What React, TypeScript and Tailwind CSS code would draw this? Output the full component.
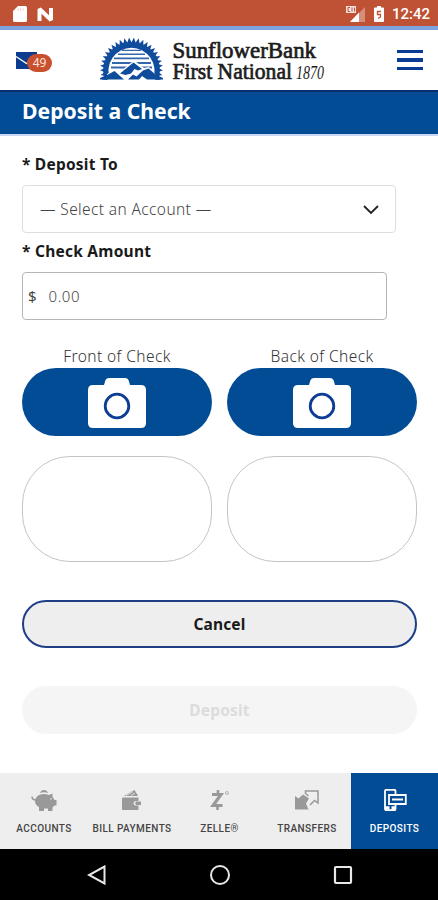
import { useState, type ReactNode } from 'react';

const teeth = Array.from({ length: 26 }, (_, i) => 160 + (i * 220) / 25);

function SdCard() {
  return (
    <svg width="14" height="16" viewBox="0 0 14 16" fill="#fff">
      <path d="M5 0h7.5A1.5 1.5 0 0 1 14 1.5v13a1.5 1.5 0 0 1-1.5 1.5h-11A1.5 1.5 0 0 1 0 14.5V5z" />
      <path d="M5 2.5v2M7.5 2.5v2M10 2.5v2" stroke="#bf5234" strokeWidth="0.8" opacity="0.4" />
    </svg>
  );
}

function NougatIcon() {
  return (
    <svg width="17" height="15" viewBox="0 0 17 15">
      <path d="M2.5 14V2l11.5 11V1" fill="none" stroke="#fff" strokeWidth="4" strokeLinejoin="bevel" />
    </svg>
  );
}

function SignalIcon() {
  return (
    <svg width="20" height="17" viewBox="0 0 20 17">
      <path d="M19 1v15H4z" fill="#fff" opacity="0.35" />
      <path d="M13 6.5V16H4z" fill="#fff" />
      <rect x="0" y="0" width="10" height="7" fill="#f4dfd9" />
      <path d="M4 1.5H2v4h2M6 1.5v4M8.5 1.5v4" fill="none" stroke="#b5443a" strokeWidth="0.9" />
    </svg>
  );
}

function BatteryIcon() {
  return (
    <svg width="10" height="16" viewBox="0 0 10 16">
      <path d="M3 0h4v1.6h2a1 1 0 0 1 1 1V15a1 1 0 0 1-1 1H1a1 1 0 0 1-1-1V2.6a1 1 0 0 1 1-1h2z" fill="#fff" />
      <path d="M7 5.5H3.5v3h3V11L4 12.5" fill="none" stroke="#bf5234" strokeWidth="1.3" />
    </svg>
  );
}

function BankLogo() {
  return (
    <svg width="232" height="48" viewBox="0 0 232 48" className="shrink-0">
      <g fill="#104c9c">
        {teeth.map((deg) => (
          <path key={deg} d="M58.500 30.700 64 33l-5.500 2.300z" transform={`rotate(${deg} 32.500 33)`} />
        ))}
        <path d="M5.600 43a28.300 28.300 0 1 1 53.800 0H54a23 23 0 1 0-43 0z" />
        <path d="M23 13.800h19V15H23zM19 17.500h27v1.400H19zM15 21.500h35v1.700H15zM13 26h39v1.900H13zM12 30.500h41v2H12z" opacity="0.85" />
      </g>
      <path d="M8 43V38l9-5 5 2 11-9 3-1 9 7 5-1 10 12z" fill="#fff" />
      <path
        d="M1 43.500v-1.500l8-3.500 6.500-3.500 5 4.500 4.500 4zM21 37.500l13.500-11L43 33l-4 1.500-3.500-1.500-3.500 4.500-5.500 1.500zM29 43.500l5-5 3.500 2 6.500-6 5.500-2 7 6 7.500 3.500v1.500H48l-5-3.500-3 3.500z"
        fill="#104c9c"
      />
      <g fill="#1c1c1c" stroke="#1c1c1c" strokeWidth="0.7" className="font-['Liberation_Serif',serif]">
        <text x="73.500" y="21.500" fontSize="22.500" textLength="143.500" lengthAdjust="spacingAndGlyphs">SunflowerBank</text>
        <text x="73.500" y="42.500" fontSize="22.500" textLength="119.500" lengthAdjust="spacingAndGlyphs">First National</text>
        <text x="197" y="43" fontSize="18" stroke="none" fontStyle="italic" textLength="28" lengthAdjust="spacingAndGlyphs">1870</text>
      </g>
    </svg>
  );
}

function CameraIcon() {
  return (
    <svg width="58" height="52" viewBox="0 0 58 52">
      <path
        d="M5 8h11l1.500-5Q18.500 1 21 1h16q2.500 0 3.500 2L42 8h11q5 0 5 5v33q0 5-5 5H5q-5 0-5-5V13q0-5 5-5z"
        fill="#fff"
      />
      <circle cx="29" cy="29" r="11.8" fill="none" stroke="#0c3c94" strokeWidth="2.8" />
    </svg>
  );
}

function PiggyIcon() {
  return (
    <svg width="26" height="24" viewBox="0 0 26 24" fill="#999">
      <path d="M9 5a4.200 4.200 0 0 1 8 0q-4-1.500-8 0z" />
      <path d="M1 8.500q0 3.500 4 3.500" fill="none" stroke="#999" strokeWidth="1.5" />
      <path d="M4 13q1-7 9-7 3 0 5 1l3.500-1.500V9q1.500 1.500 2 3H25.500v5.500H23.500l-2 2v3.500h-4.500V20.500h-4v2.500H8v-4q-4-2-4-6z" />
      <path d="M20 10v1.500" stroke="#eee" strokeWidth="1.2" />
    </svg>
  );
}

function WalletIcon() {
  return (
    <svg width="20" height="20" viewBox="0 0 20 20" fill="#999">
      <path d="M2 6 12.500 0 15 4 16 6z" />
      <path d="M4 5.500l6.500-3.500M9 5.500l4-2.500" stroke="#eee" strokeWidth="0.8" />
      <path d="M1 7.500h15.500V11H14q-2.500 0-2.500 2.300t2.500 2.200h2.500V20H1q-1 0-1-1V8.500q0-1 1-1z" />
      <path d="M14 11.500h5v3.500h-5q-1.800-1.700 0-3.500z" />
    </svg>
  );
}

function ZelleIcon() {
  return (
    <svg width="20" height="22" viewBox="0 0 20 22" fill="none" stroke="#999">
      <path d="M2 5.500h9L3 16.500h9.500" strokeWidth="3.2" />
      <path d="M8 1v4M7.500 17v4" strokeWidth="2.6" />
      <circle cx="17" cy="4" r="1.5" strokeWidth="0.7" />
    </svg>
  );
}

function TransferIcon() {
  return (
    <svg width="24" height="20" viewBox="0 0 24 20">
      <path d="M13.500 6 10.500 3.500V1H23v12l-3.500-2.500L15 15" fill="none" stroke="#999" strokeWidth="1.5" />
      <path d="M0 6l3.500 2.500L8 4.500l6 4-3 5 2.500 6H0z" fill="#999" />
    </svg>
  );
}

function DepositIcon() {
  return (
    <svg width="24" height="22" viewBox="0 0 24 22" fill="none" stroke="#fff">
      <path d="M12.500 5V2q0-1.200-1.200-1.200h-8Q2 .8 2 2v18q0 1.200 1.300 1.200h8q1.200 0 1.200-1.200v-4" strokeWidth="1.8" />
      <path d="M2 19h4.500M8.500 19h4" strokeWidth="3.5" />
      <path d="M6 6h16.800v9H6z" strokeWidth="1.8" />
      <path d="M9 10.500h11" strokeWidth="2" />
    </svg>
  );
}

const tabs: { label: string; icon: ReactNode }[] = [
  { label: 'ACCOUNTS', icon: <PiggyIcon /> },
  { label: 'BILL PAYMENTS', icon: <WalletIcon /> },
  { label: 'ZELLE®', icon: <ZelleIcon /> },
  { label: 'TRANSFERS', icon: <TransferIcon /> },
  { label: 'DEPOSITS', icon: <DepositIcon /> },
];

export default function App() {
  const [amount, setAmount] = useState('0.00');
  const [active, setActive] = useState('DEPOSITS');

  return (
    <div className="flex h-[900px] w-[438px] flex-col overflow-hidden bg-white font-['Noto_Sans',sans-serif]">
      <div className="flex h-[26px] shrink-0 items-center bg-[#bf5234] pt-0.5 pr-2 pl-[13px] text-white">
        <SdCard />
        <div className="ml-2.5">
          <NougatIcon />
        </div>
        <div className="ml-auto flex items-center">
          <SignalIcon />
          <div className="ml-2">
            <BatteryIcon />
          </div>
          <span className="ml-2 font-['Roboto',sans-serif] text-[15px] leading-4 font-medium">12:42</span>
        </div>
      </div>
      <div className="h-1 shrink-0 bg-[#7da3df]" />

      <header className="flex h-[60px] shrink-0 items-center pr-[15px] pl-4">
        <button className="relative h-[22px] w-9" aria-label="Messages">
          <svg width="21" height="17" viewBox="0 0 21 17">
            <path d="M0 0h21v17H0z" fill="#0b3c8f" />
            <path d="M0 4.500 10.500 11.500 21 4.500" fill="none" stroke="#fff" strokeWidth="1.4" />
          </svg>
          <span className="absolute top-[5px] left-[11px] flex h-[18px] w-[25px] items-center justify-center rounded-full bg-[#c8502f] text-[12px] text-[#f8e4dc]">
            49
          </span>
        </button>
        <div className="ml-[47px]">
          <BankLogo />
        </div>
        <button className="ml-auto flex w-[26px] flex-col gap-[5px]" aria-label="Menu">
          <span className="h-[3.5px] bg-[#0b3c94]" />
          <span className="h-[3.5px] bg-[#0b3c94]" />
          <span className="h-[3.5px] bg-[#0b3c94]" />
        </button>
      </header>

      <div className="flex h-11 shrink-0 items-center border-t-2 border-[#0a2f70] bg-[#024c96] pl-[22px]">
        <h1 className="pb-1 text-[21.2px] leading-7 font-bold text-white">Deposit a Check</h1>
      </div>
      <div className="h-0.5 shrink-0 bg-[#c8d6f2]" />

      <main className="flex flex-col pt-[17px] pr-[21px] pl-[22px]">
        <label className="h-[23px] text-[15.5px] leading-[23px] font-bold tracking-[0.22px] text-[#1a1a1a]">* Deposit To</label>
        <button className="mt-[9px] flex h-12 w-[374px] items-center justify-between rounded border-[1.5px] border-[#dedede] pt-0.5 pr-4 pl-[17px] text-[15.5px] font-light tracking-[0.38px] text-[#444]">
          <span>— Select an Account —</span>
          <svg width="16" height="10" viewBox="0 0 16 10" fill="none" stroke="#222" strokeWidth="1.8">
            <path d="m1 1 7 7 7-7" />
          </svg>
        </button>
        <label className="mt-[7px] h-[23px] text-[15.5px] leading-[23px] font-bold tracking-[0.25px] text-[#1a1a1a]">* Check Amount</label>
        <div className="mt-[9px] flex h-12 w-[365px] items-center rounded border border-[#b5b5b5] pl-[5px] text-[15px] text-[#444]">
          <span>$</span>
          <input
            value={amount}
            onChange={(e) => setAmount(e.target.value)}
            className="ml-3 w-72 font-light tracking-[0.5px] outline-none"
          />
        </div>

        <div className="mt-[26px] grid grid-cols-2 gap-x-[15px]">
          {['Front of Check', 'Back of Check'].map((side) => (
            <div key={side} className="flex flex-col">
              <span className="h-[22px] text-center text-[15.5px] leading-5 font-light tracking-[0.42px] text-[#333]">{side}</span>
              <button className="flex h-[68px] items-center justify-center rounded-[34px] bg-[#024c96] pt-0.5" aria-label={side}>
                <CameraIcon />
              </button>
              <div className="mt-5 h-[106px] rounded-[48px] border border-[#c4c4c4]" />
            </div>
          ))}
        </div>

        <button className="mt-[38px] h-12 rounded-full border-2 border-[#1e3f86] bg-[#eee] pt-0.5 text-[15.5px] font-bold tracking-[0.15px] text-[#1a1a1a]">
          Cancel
        </button>
        <button className="mt-[38px] h-12 rounded-full bg-[#f5f5f5] pt-0.5 text-[15.5px] font-bold tracking-[0.2px] text-[#dcdcdc]" disabled>
          Deposit
        </button>
      </main>

      <nav className="mt-auto grid h-[76px] shrink-0 grid-cols-[88px_88px_87px_88px_87px]">
        {tabs.map((tab) => (
          <button
            key={tab.label}
            onClick={() => setActive(tab.label)}
            className={`flex flex-col items-center pt-[15px] ${active === tab.label ? 'bg-[#024c96] text-white' : 'bg-[#eee] text-[#444]'}`}
          >
            <div className="flex h-6 items-center">{tab.icon}</div>
            <span className="mt-2.5 font-['Roboto',sans-serif] text-[10px] leading-3.5 font-medium tracking-[0.42px] whitespace-nowrap">
              {tab.label}
            </span>
          </button>
        ))}
      </nav>

      <div className="flex h-[51px] shrink-0 items-center justify-between bg-black pr-[85px] pl-[87px]">
        <svg width="20" height="20" viewBox="0 0 20 20" fill="none" stroke="#e8e8e8" strokeWidth="2">
          <path d="M17.500 1.500v17L2 10z" />
        </svg>
        <svg width="20" height="20" viewBox="0 0 20 20" fill="none" stroke="#e8e8e8" strokeWidth="2">
          <circle cx="10" cy="10" r="9" />
        </svg>
        <svg width="20" height="20" viewBox="0 0 20 20" fill="none" stroke="#e8e8e8" strokeWidth="2.2">
          <rect x="2" y="2" width="16" height="16" rx="1" />
        </svg>
      </div>
    </div>
  );
}
